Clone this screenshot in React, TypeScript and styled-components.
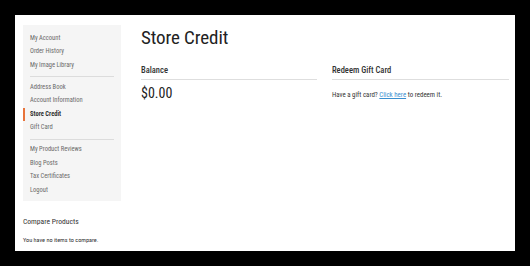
import { createGlobalStyle, styled } from "styled-components";

const GlobalStyle = createGlobalStyle`
    html, body {
        margin: 0;
        background: #000;
    }
    body {
        font-family: "Roboto Condensed", "Liberation Sans Narrow", "DejaVu Sans Condensed", Roboto, sans-serif;
        font-stretch: condensed;
        color: #333;
    }
`;

const Frame = styled.div`
    width: 530px;
    height: 266px;
    padding: 15px;
    box-sizing: border-box;
`;

const Page = styled.div`
    display: flex;
    gap: 20px;
    height: 100%;
    padding: 10px 6px 0 8px;
    box-sizing: border-box;
    background: #fff;
`;

const SideColumn = styled.aside`
    width: 98px;
    flex-shrink: 0;
    display: flex;
    flex-direction: column;
`;

const Nav = styled.nav`
    background: #f5f5f5;
    padding: 6.5px 0 3.5px;
`;

const NavItem = styled.div<{ $active?: boolean }>`
    font-size: 6.5px;
    line-height: 13.5px;
    white-space: nowrap;
    padding-left: ${p => (p.$active ? "5px" : "7px")};
    border-left: ${p => (p.$active ? "2px solid #e8743b" : "none")};
    font-weight: ${p => (p.$active ? 700 : 400)};
    color: ${p => (p.$active ? "#333" : "#6a6a6a")};
`;

const NavDivider = styled.div`
    height: 1px;
    background: #dcdcdc;
    margin: 4px 7px 3.5px;
`;

const CompareTitle = styled.h3`
    margin: 16px 0 0;
    font-size: 7.6px;
    line-height: 10px;
    font-weight: 400;
    color: #333;
`;

const CompareText = styled.p`
    margin: 9px 0 0;
    font-size: 6.2px;
    line-height: 8px;
    color: #333;
`;

const Main = styled.main`
    flex: 1;
    display: flex;
    flex-direction: column;
`;

const Title = styled.h1`
    margin: 1px 0 0;
    font-size: 19px;
    line-height: 24px;
    font-weight: 400;
    letter-spacing: -0.1px;
    color: #222;
`;

const Columns = styled.div`
    display: grid;
    grid-template-columns: 176px 177px;
    column-gap: 15px;
    margin-top: 14px;
`;

const BlockTitle = styled.h2`
    margin: 0;
    padding-bottom: 3px;
    border-bottom: 1px solid #dedede;
    font-size: 8.5px;
    line-height: 12px;
    font-weight: 500;
    color: #333;
`;

const Amount = styled.div`
    margin-top: 5px;
    font-size: 14px;
    line-height: 16px;
    font-weight: 400;
    color: #222;
`;

const Note = styled.p`
    margin: 10px 0 0;
    font-size: 6.9px;
    line-height: 10px;
    color: #333;
`;

const Link = styled.a`
    color: #3a8fcf;
    text-decoration: underline;
`;

const groups = [
    ["My Account", "Order History", "My Image Library"],
    ["Address Book", "Account Information", "Store Credit", "Gift Card"],
    ["My Product Reviews", "Blog Posts", "Tax Certificates", "Logout"],
];

export default function App() {
    return (
        <Frame>
            <GlobalStyle />
            <Page>
                <SideColumn>
                    <Nav>
                        {groups.map((group, i) => (
                            <div key={i}>
                                {i > 0 && <NavDivider />}
                                {group.map(label => (
                                    <NavItem key={label} $active={label === "Store Credit"}>
                                        {label}
                                    </NavItem>
                                ))}
                            </div>
                        ))}
                    </Nav>
                    <CompareTitle>Compare Products</CompareTitle>
                    <CompareText>You have no items to compare.</CompareText>
                </SideColumn>
                <Main>
                    <Title>Store Credit</Title>
                    <Columns>
                        <div>
                            <BlockTitle>Balance</BlockTitle>
                            <Amount>$0.00</Amount>
                        </div>
                        <div>
                            <BlockTitle>Redeem Gift Card</BlockTitle>
                            <Note>
                                Have a gift card? <Link href="#">Click here</Link> to redeem it.
                            </Note>
                        </div>
                    </Columns>
                </Main>
            </Page>
        </Frame>
    );
}
